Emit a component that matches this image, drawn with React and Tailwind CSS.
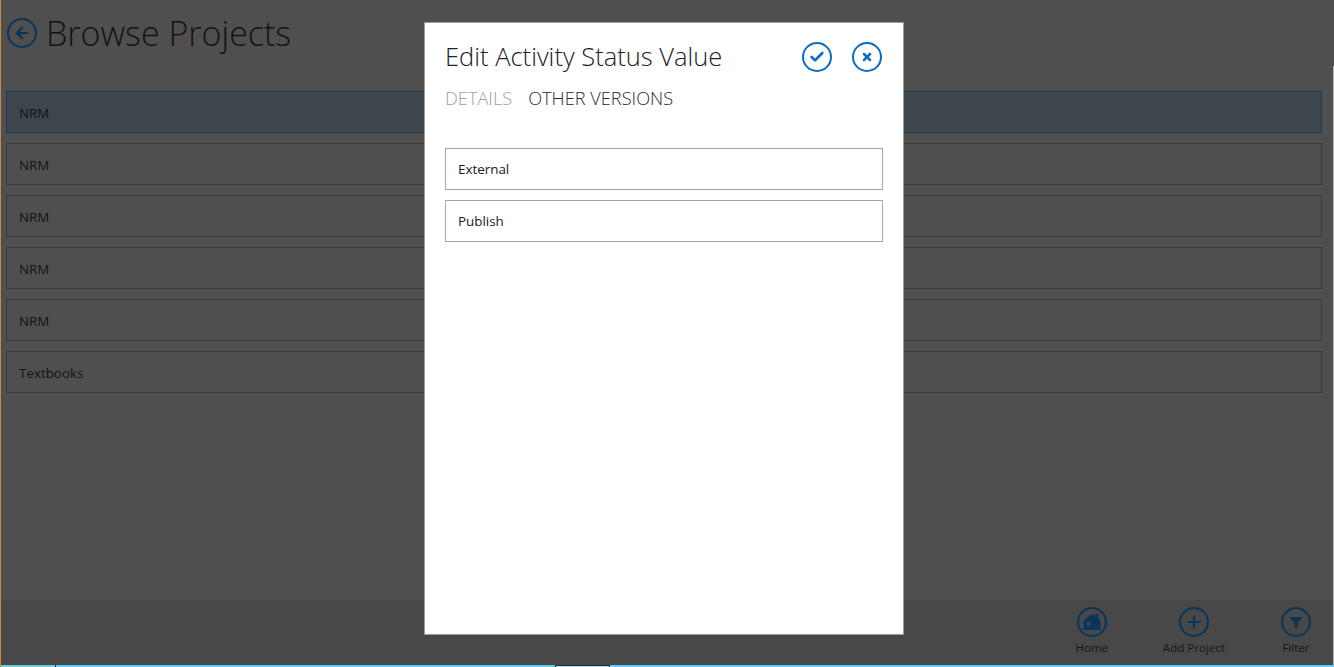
import { ArrowLeft, Check, Plus, X } from "lucide-react";
import React from "react";

const font = "font-['Open_Sans','Liberation_Sans',sans-serif]";

function CircleButton({ children, className }) {
  return (
    <div className={`flex items-center justify-center rounded-full border-2 w-[30px] h-[30px] ${className}`}>
      {children}
    </div>
  );
}

function Row({ label, selected }) {
  return (
    <div
      className={`h-[42px] flex items-center pl-3 pt-[2px] text-[13.4px] text-[#141414] border ${
        selected ? "bg-[#3d454d] border-[#1b3a57]" : "border-[#3a3a3a]"
      }`}
    >
      {label}
    </div>
  );
}

function BarItem({ label, children }) {
  return (
    <div className="flex flex-col items-center w-[102px]">
      <CircleButton className="border-[#083559] text-[#083559]">{children}</CircleButton>
      <span className="text-[11.6px] leading-[16px] mt-[3px] text-[#161616]">{label}</span>
    </div>
  );
}

export default function App() {
  return (
    <div className={`relative w-[1334px] h-[667px] overflow-hidden flex flex-col bg-[#4f4f4f] border-l border-[#c98a45] ${font}`}>
      {/* Page behind the dialog */}
      <div className="flex-1 min-h-0 pr-[12px]">
        <div className="h-[91px] flex items-start pl-[6px] pt-[14px]">
          <CircleButton className="border-[#083559] text-[#083559] mt-[4px]">
            <ArrowLeft size={18} strokeWidth={3} />
          </CircleButton>
          <h1 className="ml-[9px] -mt-[1px] text-[34px] leading-[40px] font-light text-[#141414]">Browse Projects</h1>
        </div>
        <div className="flex flex-col gap-[10px] pl-[5px]">
          <Row label="NRM" selected />
          <Row label="NRM" />
          <Row label="NRM" />
          <Row label="NRM" />
          <Row label="NRM" />
          <Row label="Textbooks" />
        </div>
      </div>

      {/* App bar */}
      <div className="h-[65px] shrink-0 bg-[#484848] flex justify-end items-start pt-[7px] -mr-[13px]">
        <BarItem label="Home">
          <svg width="20" height="20" viewBox="0 0 20 20" fill="#083559">
            <path d="M10 2 12.5 4.2V3L15 1.5l1.6 2-1.1 2.3L18.5 8.5V18h-17V8.5z" />
            <rect x="5" y="10" width="3.5" height="3.5" fill="#484848" />
          </svg>
        </BarItem>
        <BarItem label="Add Project">
          <Plus size={20} strokeWidth={2.6} />
        </BarItem>
        <BarItem label="Filter">
          <svg width="16" height="16" viewBox="0 0 16 16" fill="#083559">
            <path d="M1 3h14L9.6 9v5H6.4V9z" />
          </svg>
        </BarItem>
      </div>

      {/* Task bar sliver */}
      <div className="h-[2px] shrink-0 flex bg-[#62cdec]">
        <div className="w-[55px] bg-[#7cc3dc] border-r border-[#2d2d2d]"></div>
        <div className="w-[499px]"></div>
        <div className="w-[55px] bg-[#a8e3f3] border-t border-x border-[#2d2d2d]"></div>
      </div>

      {/* Window edge */}
      <div className="absolute right-0 top-[66px] bottom-[2px] w-px bg-[#b4b4b4]"></div>

      {/* Dialog */}
      <div className="absolute left-[423px] top-[22px] w-[480px] h-[613px] bg-white border border-[#9c9c9c] px-[20px]">
        <div className="h-[63px] flex items-start pt-[19px]">
          <h2 className="-mt-[1px] text-[25.5px] leading-[30px] font-light text-[#222222]">Edit Activity Status Value</h2>
          <div className="ml-auto flex gap-[20px] mr-[1px]">
            <CircleButton className="border-[#0a6cc2] text-[#0a6cc2]">
              <Check size={16} strokeWidth={4} />
            </CircleButton>
            <CircleButton className="border-[#0a6cc2] text-[#0a6cc2]">
              <X size={12} strokeWidth={5} />
            </CircleButton>
          </div>
        </div>
        <div className="flex gap-[16px] text-[18.2px] leading-[24px] font-light">
          <span className="text-[#a0a0a0]">DETAILS</span>
          <span className="text-[#2a2a2a]">OTHER VERSIONS</span>
        </div>
        <div className="mt-[38px] flex flex-col gap-[10px]">
          <div className="h-[42px] flex items-center pl-3 text-[13.4px] text-[#1a1a1a] border border-[#a6a6a6]">External</div>
          <div className="h-[42px] flex items-center pl-3 text-[13.4px] text-[#1a1a1a] border border-[#a6a6a6]">Publish</div>
        </div>
      </div>
    </div>
  );
}
